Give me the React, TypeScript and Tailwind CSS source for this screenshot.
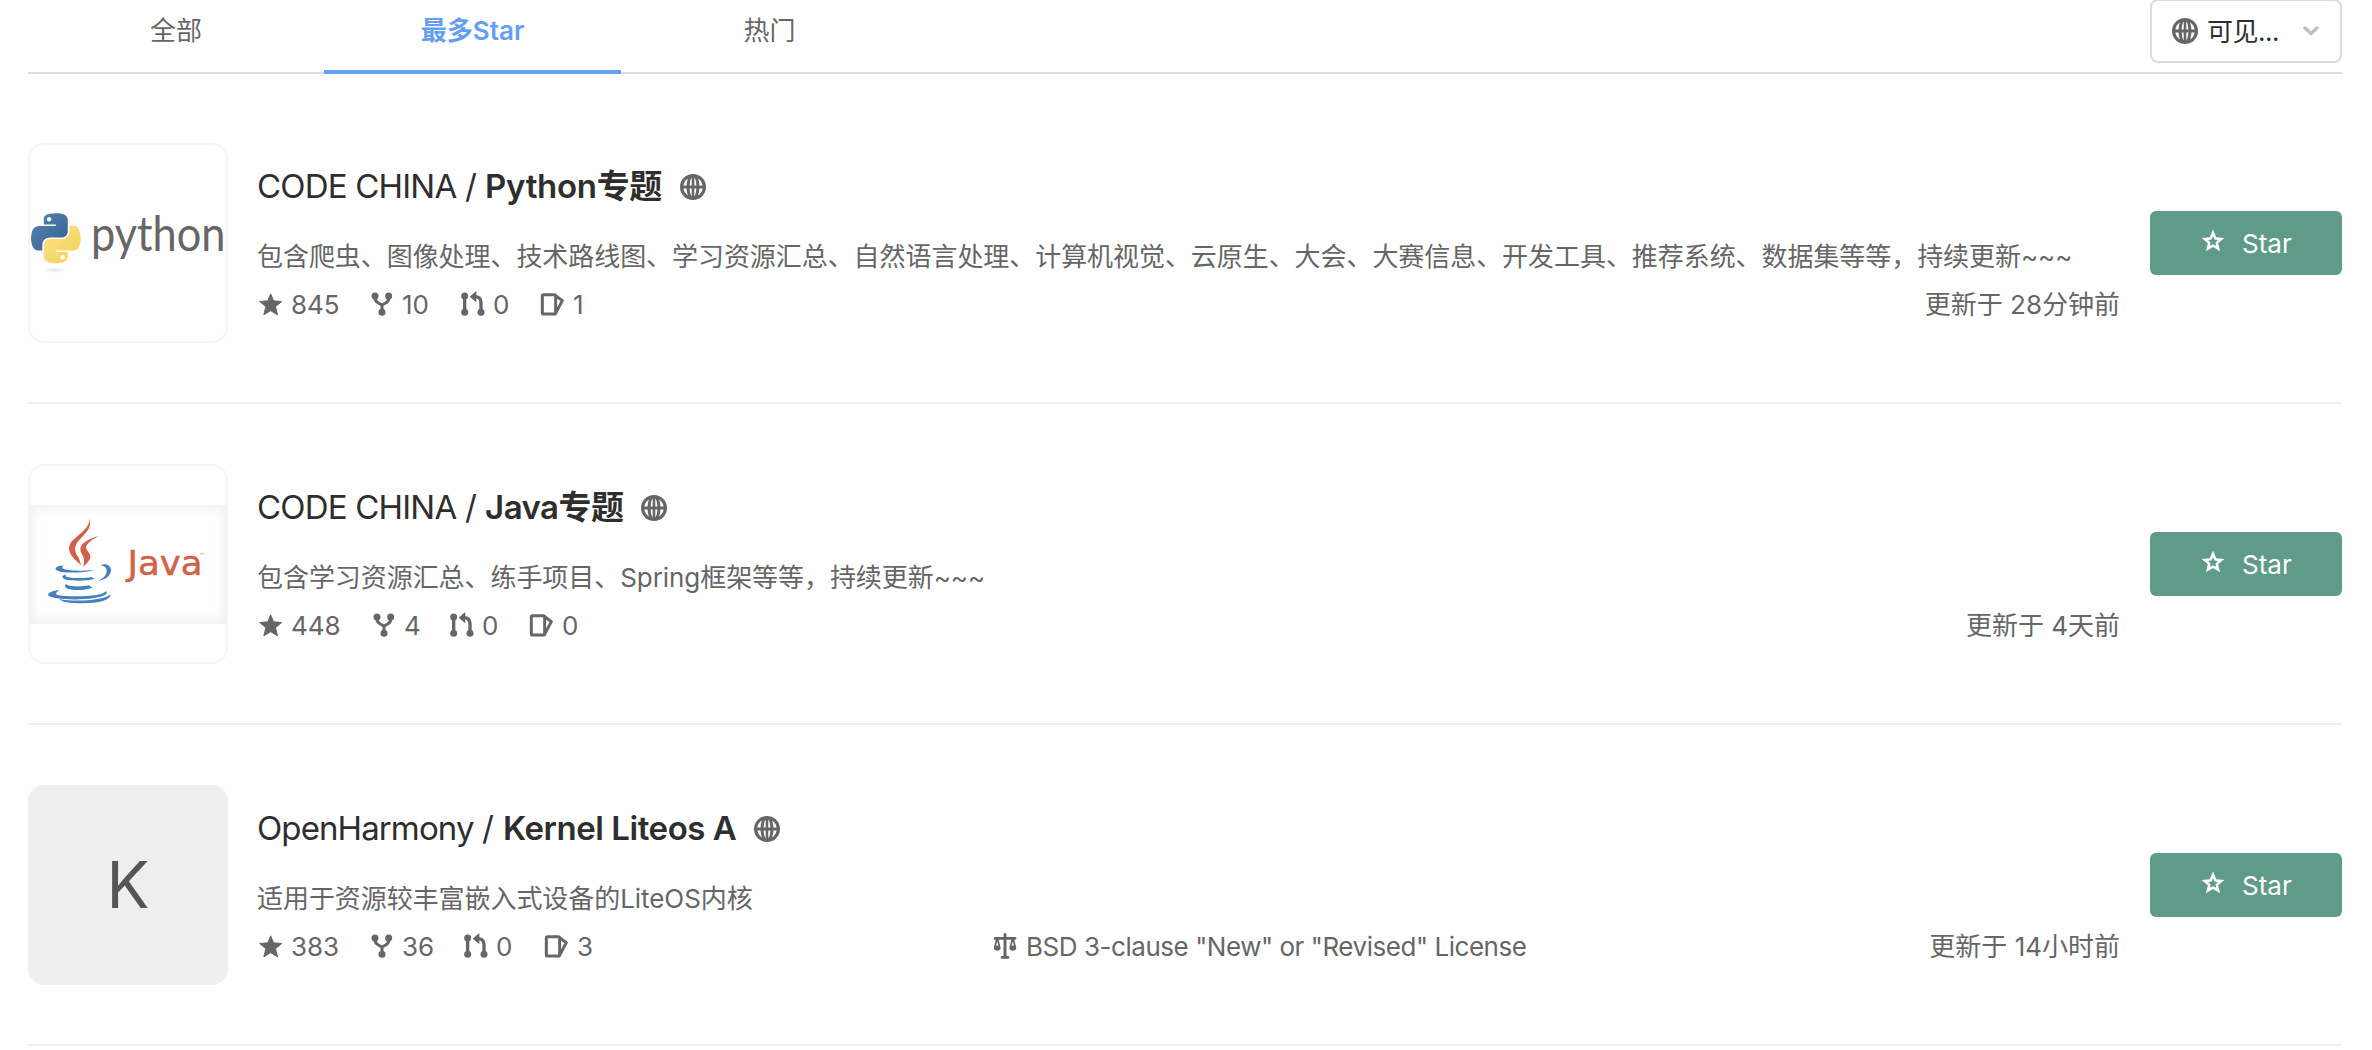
import React from "react";

const GlobeIcon = () => (
  <svg width="26" height="26" viewBox="0 0 26 26" className="shrink-0">
    <circle cx="13" cy="13" r="13" fill="#666" />
    <g fill="#fff">
      <path d="M8 4.500C5.500 5.900 3.900 8.300 3.400 11.400h3.200c.1-2.700.6-5 1.400-6.900ZM8 21.500C5.500 20.100 3.900 17.700 3.400 14.600h3.200c.1 2.700.6 5 1.400 6.900ZM18 4.500c2.500 1.400 4.100 3.800 4.600 6.900h-3.200c-.1-2.700-.6-5-1.400-6.900ZM18 21.500c2.500-1.400 4.100-3.800 4.600-6.900h-3.200c-.1 2.700-.6 5-1.400 6.900Z" />
      <path d="M11.700 3.600v7.800H9.700c.1-3.600.8-6.700 2-7.800ZM14.300 3.600v7.800h2c-.1-3.600-.8-6.700-2-7.800ZM11.700 22.400v-7.800H9.700c.1 3.600.8 6.700 2 7.800ZM14.300 22.400v-7.800h2c-.1 3.600-.8 6.700-2 7.800Z" />
    </g>
  </svg>
);

const StarIcon = () => (
  <svg width="26" height="26" viewBox="0 0 78 78" className="shrink-0" fill="currentColor">
    <path
      d="M38 8.500 46.500 29.500 71 31.500 52.500 47 58.500 71.500 38 59 17.500 71.500 23.500 47 5 31.500 29.500 29.500Z"
      stroke="currentColor"
      strokeWidth="3"
      strokeLinejoin="round"
    />
  </svg>
);

const ForkIcon = () => (
  <svg width="26" height="26" viewBox="0 0 78 78" className="shrink-0" fill="currentColor">
    <circle cx="18" cy="15" r="10.500" />
    <circle cx="59" cy="15" r="10.500" />
    <circle cx="39" cy="64" r="10.500" />
    <path d="M18 15v7c0 8 4 11 10 14l11 6 11-6c6-3 9-6 9-14v-7M39 41v23" fill="none" stroke="currentColor" strokeWidth="9" />
  </svg>
);

const MergeIcon = () => (
  <svg width="26" height="26" viewBox="0 0 78 78" className="shrink-0" fill="currentColor">
    <circle cx="14" cy="15" r="10.500" />
    <circle cx="14" cy="64" r="10.500" />
    <circle cx="63" cy="64" r="10.500" />
    <path d="M14 15v49M44 17c13 0 19 6 19 18v29" fill="none" stroke="currentColor" strokeWidth="10" />
    <path d="M29 17 49 0v34Z" />
  </svg>
);

const IssueIcon = () => (
  <svg width="26" height="26" viewBox="0 0 78 78" className="shrink-0" fill="none" stroke="currentColor">
    <rect x="7" y="11" width="40" height="58" rx="4" strokeWidth="9" />
    <path d="M48 15 67 29 48 65" strokeWidth="9" strokeLinejoin="round" />
  </svg>
);

const ScaleIcon = () => (
  <svg width="24" height="26" viewBox="0 0 24 26" className="shrink-0" fill="currentColor">
    <path d="M10.500 1.500a1.500 1.500 0 0 1 3 0V4H22a1.400 1.400 0 0 1 0 2.800h-.7l2 8.200a3.600 3.600 0 0 1-7 0l2-8.200h-4.800V23H15a1.400 1.400 0 0 1 0 2.800H9A1.400 1.400 0 0 1 9 23h1.500V6.800H5.700l2 8.200a3.600 3.600 0 0 1-7 0l2-8.200H2A1.400 1.400 0 0 1 2 4h8.500Z" />
    <path d="m4.200 8.500 1.200 4H3ZM19.800 8.500l1.200 4h-2.400Z" fill="#fff" />
  </svg>
);

const PythonLogo = () => (
  <svg width="196" height="196" viewBox="2 2 196 196">
    <defs>
      <linearGradient id="pyBlue" x1="0" y1="0" x2="1" y2="1">
        <stop offset="0" stopColor="#5585b5" />
        <stop offset="1" stopColor="#365f8d" />
      </linearGradient>
      <linearGradient id="pyYellow" x1="0" y1="0" x2="1" y2="1">
        <stop offset="0" stopColor="#fce487" />
        <stop offset="1" stopColor="#f2cf58" />
      </linearGradient>
      <radialGradient id="pyShade">
        <stop offset="0" stopColor="#e6e6e6" />
        <stop offset="1" stopColor="#fff" />
      </radialGradient>
    </defs>
    <ellipse cx="27" cy="127" rx="12" ry="3" fill="url(#pyShade)" />
    <g transform="translate(3 70.300) scale(.447)">
      <path
        fill="url(#pyBlue)"
        d="M54.919.001C50.335.022 45.958.413 42.106 1.095 30.760 3.099 28.700 7.295 28.700 15.032v10.219h26.813v3.406H18.638c-7.793 0-14.616 4.684-16.750 13.594-2.462 10.213-2.571 16.586 0 27.250 1.906 7.938 6.458 13.594 14.250 13.594h9.219v-12.250c0-8.850 7.657-16.656 16.750-16.656h26.781c7.455 0 13.406-6.138 13.406-13.625V15.033c0-7.266-6.130-12.725-13.406-13.937C64.282.328 59.502-.021 54.919.001Zm-14.500 8.219c2.770 0 5.031 2.299 5.031 5.125 0 2.817-2.262 5.094-5.031 5.094-2.779 0-5.031-2.277-5.031-5.094 0-2.826 2.252-5.125 5.031-5.125Z"
      />
      <path
        fill="url(#pyYellow)"
        d="M85.638 28.657v11.906c0 9.231-7.826 17-16.750 17H42.106c-7.336 0-13.406 6.278-13.406 13.625v25.531c0 7.266 6.319 11.540 13.406 13.625 8.488 2.496 16.627 2.947 26.781 0 6.750-1.954 13.406-5.888 13.406-13.625V86.501H55.513v-3.406h40.188c7.792 0 10.696-5.435 13.406-13.594 2.799-8.399 2.742-16.476 0-27.250-1.926-7.757-5.604-13.594-13.406-13.594H85.638Zm-15.063 64.656c2.779 0 5.031 2.277 5.031 5.094 0 2.826-2.252 5.125-5.031 5.125-2.770 0-5.031-2.299-5.031-5.125 0-2.817 2.262-5.094 5.031-5.094Z"
      />
    </g>
    <text x="63" y="107.500" textLength="134.500" lengthAdjust="spacingAndGlyphs" fontFamily="Lato, sans-serif" fontSize="48" fill="#666">
      python
    </text>
  </svg>
);

const JavaLogo = () => (
  <div className="flex h-[119px] w-full items-center justify-center bg-white shadow-[inset_0_0_12px_3px_#f0f0f0]">
    <svg width="196" height="119" viewBox="2 41 196 119">
      <g transform="translate(-8 -9) scale(.3333)">
        <path fill="#cf6248" d="M208 190c8 26-6 40-24 58-20 20-26 34-8 60l8 22c-28-20-44-42-34-62 12-24 62-44 58-78Z" />
        <path fill="#cf6248" d="M237 243c-30 8-58 22-56 42 2 14 18 22 8 50 18-14 26-26 20-38-8-14-16-18-6-30 6-8 18-16 34-24Z" />
        <g fill="#4380bd">
          <path d="M130 331c-20 3-26 8-22 13 10 11 76 12 116 1-34 3-88 4-96-5-2-4 0-6 2-9Z" />
          <path d="M240 330c20-6 34 2 33 17-1 14-16 27-39 31 18-9 26-19 26-31 0-10-8-15-20-17Z" />
          <path d="M138 358c-10 3-13 7-9 11 9 10 66 10 94 3l-8-6c-22 5-64 4-76-1-3-2-3-4-1-7Z" />
          <path d="M141 386c-8 4-8 9-2 13 14 9 56 8 78-1l-10-7c-20 5-52 4-64 0-3-1-3-3-2-5Z" />
          <path d="M119 405c-20 2-38 9-34 16 8 16 152 18 174-4 3-3 1-6-2-9-4 8-22 12-54 15-40 2-80 0-92-4-6-4 0-9 8-14Z" />
          <path d="M118 432c36 8 126 8 155-14-4 18-32 27-88 27-36 0-60-4-67-13Z" />
        </g>
      </g>
      <text x="99.500" y="111" textLength="75" lengthAdjust="spacingAndGlyphs" fontFamily="DejaVu Sans, sans-serif" fontSize="34" fill="#cf6248" stroke="#cf6248" strokeWidth=".5">
        Java
      </text>
      <text x="171.500" y="93" fontFamily="DejaVu Sans, sans-serif" fontSize="5.500" fill="#cf6248">
        ™
      </text>
    </svg>
  </div>
);

type Repo = {
  owner: string;
  name: string;
  nameClass: string;
  ownerClass: string;
  desc: string;
  stats: [string, string, string, string];
  widths: [string, string, string];
  updated: string;
  license?: string;
  logo: React.ReactNode;
  logoClass: string;
};

const repos: Repo[] = [
  {
    owner: "CODE CHINA /",
    name: "Python专题",
    ownerClass: "w-[228px] tracking-[-0.8px]",
    nameClass: "w-[195px] tracking-[-0.3px]",
    desc: "包含爬虫、图像处理、技术路线图、学习资源汇总、自然语言处理、计算机视觉、云原生、大会、大赛信息、开发工具、推荐系统、数据集等等，持续更新~~~",
    stats: ["845", "10", "0", "1"],
    widths: ["w-[111px]", "w-[91px]", "w-[80px]"],
    updated: "更新于 28分钟前",
    logo: <PythonLogo />,
    logoClass: "border-[#f5f5f5]",
  },
  {
    owner: "CODE CHINA /",
    name: "Java专题",
    ownerClass: "w-[228px] tracking-[-0.8px]",
    nameClass: "w-[156px] tracking-[-0.5px]",
    desc: "包含学习资源汇总、练手项目、Spring框架等等，持续更新~~~",
    stats: ["448", "4", "0", "0"],
    widths: ["w-[113px]", "w-[78px]", "w-[80px]"],
    updated: "更新于 4天前",
    logo: <JavaLogo />,
    logoClass: "border-[#f5f5f5]",
  },
  {
    owner: "OpenHarmony /",
    name: "Kernel Liteos A",
    ownerClass: "w-[246px] tracking-[-0.9px]",
    nameClass: "w-[251px] tracking-[-0.45px]",
    desc: "适用于资源较丰富嵌入式设备的LiteOS内核",
    stats: ["383", "36", "0", "3"],
    widths: ["w-[111px]", "w-[94px]", "w-[81px]"],
    updated: "更新于 14小时前",
    license: 'BSD 3-clause "New" or "Revised" License',
    logo: <span className="text-[64px] leading-none text-[#555]">K</span>,
    logoClass: "border-[#f0f0f0] bg-[#eeeeee]",
  },
];

const Stat = ({ icon, value, width }: { icon: React.ReactNode; value: string; width?: string }) => (
  <span className={`flex shrink-0 items-center gap-[7px] ${width ?? ""}`}>
    {icon}
    <span className="tracking-[-0.1px]">{value}</span>
  </span>
);

const RepoRow = ({ repo }: { repo: Repo }) => (
  <li className="flex h-[321px] border-b-2 border-[#eeeeee] pt-[60px]">
    <div className={`flex size-[200px] shrink-0 items-center justify-center overflow-hidden rounded-2xl border-2 ${repo.logoClass}`}>
      {repo.logo}
    </div>
    <div className="ml-[30px] flex w-[1862px] flex-col pt-[22px]">
      <h2 className="-ml-px flex h-11 items-center whitespace-nowrap text-[33px] text-[#2e2e2e]">
        <span className={repo.ownerClass}>{repo.owner}</span>
        <span className={`font-semibold ${repo.nameClass}`}>{repo.name}</span>
        <GlobeIcon />
      </h2>
      <p className="-ml-px mt-[27px] flex h-10 items-center whitespace-nowrap tracking-[-0.06px]">{repo.desc}</p>
      <div className="mt-2 flex h-10 items-center whitespace-nowrap">
        <div className="flex w-[735px]">
          <Stat icon={<StarIcon />} value={repo.stats[0]} width={repo.widths[0]} />
          <Stat icon={<ForkIcon />} value={repo.stats[1]} width={repo.widths[1]} />
          <Stat icon={<MergeIcon />} value={repo.stats[2]} width={repo.widths[2]} />
          <Stat icon={<IssueIcon />} value={repo.stats[3]} />
        </div>
        {repo.license && (
          <span className="flex items-center gap-[9px] tracking-[-0.46px]">
            <ScaleIcon />
            {repo.license}
          </span>
        )}
        <span className="ml-auto">{repo.updated}</span>
      </div>
    </div>
    <button className="ml-[30px] mt-[68px] flex h-16 w-[192px] items-center rounded-md bg-[#5f9b88] pl-[51px] text-white">
      <svg width="24" height="24" viewBox="0 0 24 24" className="-mt-1 mr-[17px]">
        <path d="M12 .6 15.200 8.200 23.400 8.900 17.100 14.300 19.050 22.300 12 18 4.950 22.300 6.900 14.300.6 8.900 8.830 8.200Z" fill="#fff" />
        <path d="M12 7 13.500 10.500 16.900 11 14.500 13.400 15.100 16.800 12 15.200 8.900 16.800 9.500 13.400 7.100 11 10.500 10.500Z" fill="#5f9b88" />
      </svg>
      <span>Star</span>
    </button>
  </li>
);

export default function App() {
  return (
    <main className="h-[1050px] w-[2372px] overflow-hidden bg-white px-[28px] font-['Inter','Noto_Sans_CJK_SC',sans-serif] text-[26px] text-[#666]">
      <header className="mb-[9px] flex h-[74px] w-[2314px] border-b-2 border-[#dcdcdc]">
        <nav className="flex h-[74px] text-center leading-[61px]">
          <a className="w-[296px]">全部</a>
          <a className="w-[297px] border-b-4 border-[#659ff0] font-semibold text-[#659ff0]">最多Star</a>
          <a className="w-[297px]">热门</a>
        </nav>
        <div className="-mt-px ml-auto flex h-[64px] w-[192px] items-center rounded-lg border-2 border-[#dcdcdc] pl-5 text-[#2e2e2e]">
          <GlobeIcon />
          <span className="ml-[9px] tracking-[-0.5px]">可见...</span>
          <svg width="16" height="10" viewBox="0 0 16 10" className="ml-auto mr-[21px]">
            <path d="m2 2 6 5.500L14 2" fill="none" stroke="#bfbfbf" strokeWidth="3.500" strokeLinecap="round" strokeLinejoin="round" />
          </svg>
        </div>
      </header>
      <ul className="w-[2314px]">
        {repos.map((repo) => (
          <RepoRow key={repo.name} repo={repo} />
        ))}
      </ul>
    </main>
  );
}
